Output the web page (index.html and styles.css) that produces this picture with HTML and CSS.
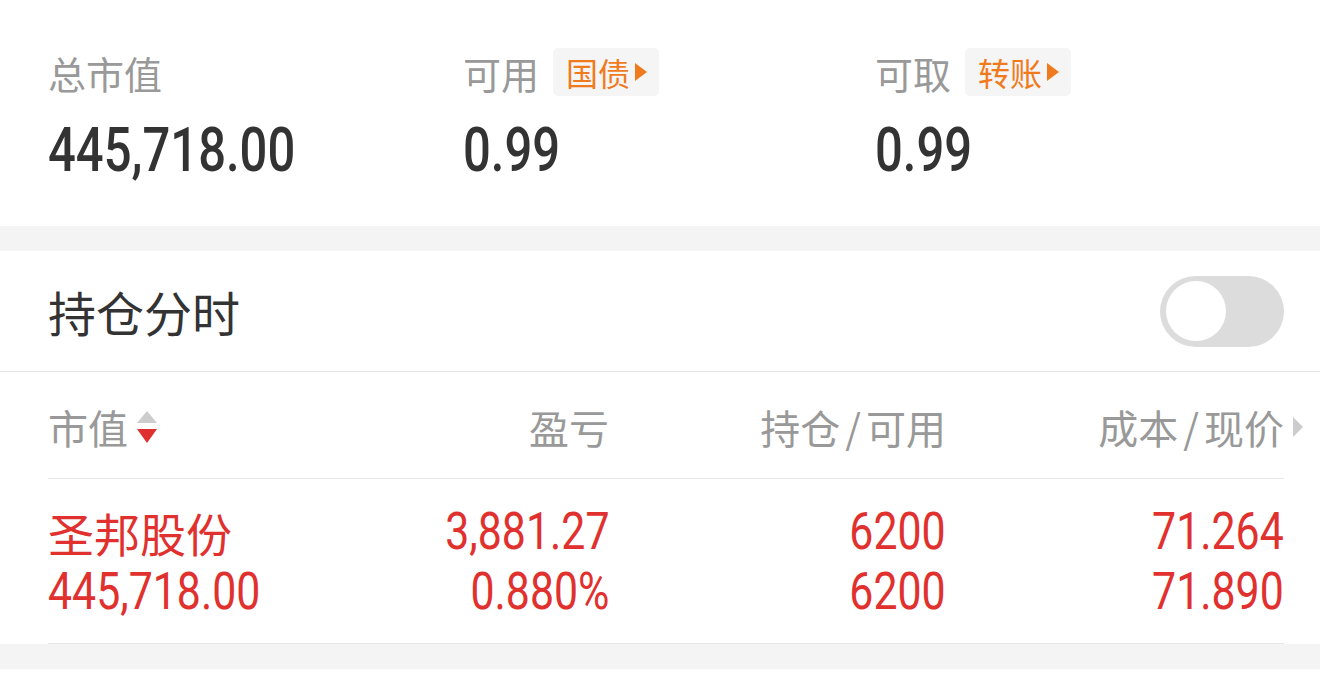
FILE: index.html
```html
<!DOCTYPE html>
<html lang="zh-CN">
<head>
    <meta charset="UTF-8">
    <meta name="viewport" content="width=device-width, initial-scale=1.0">
    <title>持仓</title>
    <link rel="stylesheet" href="styles.css">
</head>
<body>
    <div class="summary">
        <div class="stat">
            <div class="stat-label">总市值</div>
            <div class="stat-value">445,718.00</div>
        </div>
        <div class="stat">
            <div class="stat-label">可用<span class="tag">国债<i class="tag-arrow"></i></span></div>
            <div class="stat-value">0.99</div>
        </div>
        <div class="stat">
            <div class="stat-label">可取<span class="tag">转账<i class="tag-arrow"></i></span></div>
            <div class="stat-value">0.99</div>
        </div>
    </div>

    <div class="band"></div>

    <div class="positions">
        <div class="positions-head">
            <span class="positions-title">持仓分时</span>
            <span class="switch"><span class="knob"></span></span>
        </div>

        <div class="table">
            <div class="row row-head">
                <div class="cell cell-left">市值<span class="sort"><i class="sort-up"></i><i class="sort-down"></i></span></div>
                <div class="cell">盈亏</div>
                <div class="cell">持仓<span class="slash">/</span>可用</div>
                <div class="cell">成本<span class="slash">/</span>现价<i class="more"></i></div>
            </div>
            <!-- uma linha por ação -->
            <div class="row row-data">
                <div class="cell cell-left">
                    <div class="name">圣邦股份</div>
                    <div class="num">445,718.00</div>
                </div>
                <div class="cell">
                    <div class="num">3,881.27</div>
                    <div class="num">0.880%</div>
                </div>
                <div class="cell">
                    <div class="num">6200</div>
                    <div class="num">6200</div>
                </div>
                <div class="cell">
                    <div class="num">71.264</div>
                    <div class="num">71.890</div>
                </div>
            </div>
        </div>
    </div>

    <div class="band"></div>
</body>
</html>
```

FILE: styles.css
```css
body {
    margin: 0;
    background-color: #ffffff;
    font-family: 'Noto Sans CJK SC', 'Noto Sans', sans-serif;
    color: #333333;
}

/* topo: saldo */
.summary {
    display: grid;
    grid-template-columns: 415px 412px auto;
    padding: 48px 36px 46px 48px;
}
.stat {
    display: flex;
    flex-direction: column;
    align-items: flex-start;
}
.stat-label {
    display: flex;
    align-items: center;
    height: 48px;
    font-size: 38px;
    color: #999999;
}
.tag {
    display: flex;
    align-items: center;
    height: 48px;
    margin-left: 14px;
    padding: 0 12px 0 13px;
    background-color: #f5f5f5;
    border-radius: 5px;
    font-size: 32px;
    color: #f07b1e;
}
.tag-arrow {
    width: 0;
    height: 0;
    margin-left: 5px;
    border-left: 12px solid #f07b1e;
    border-top: 9px solid transparent;
    border-bottom: 9px solid transparent;
}
.stat-value {
    margin-top: 24px;
    font-family: 'Roboto', 'DejaVu Sans Condensed', sans-serif;
    font-size: 62px;
    line-height: 60px;
    font-weight: 500;
    color: #333333;
    transform: scaleX(0.79);
    transform-origin: left center;
}

.band {
    height: 25px;
    background-color: #f4f4f4;
}

/* 持仓分时 */
.positions-head {
    display: flex;
    align-items: center;
    justify-content: space-between;
    height: 120px;
    padding: 0 36px 0 48px;
    border-bottom: 1px solid #e6e6e6;
}
.positions-title {
    font-size: 48px;
    color: #333333;
}
.switch {
    display: flex;
    align-items: center;
    width: 124px;
    height: 71px;
    padding: 0 6px;
    box-sizing: border-box;
    background-color: #dcdcdc;
    border-radius: 36px;
}
.knob {
    width: 60px;
    height: 60px;
    border-radius: 50%;
    background-color: #ffffff;
}

.table {
    margin: 0 36px 0 48px;
}
.row {
    display: grid;
    grid-template-columns: 224px 337px 337px 338px;
    border-bottom: 1px solid #e6e6e6;
}
.cell {
    display: flex;
    flex-direction: column;
    align-items: flex-end;
}
.cell-left {
    align-items: flex-start;
}
.row-head {
    height: 107px;
    align-items: center;
    padding-top: 4px;
    box-sizing: border-box;
}
.row-head .cell {
    flex-direction: row;
    justify-content: flex-end;
    align-items: center;
    font-size: 40px;
    color: #999999;
}
.row-head .cell-left {
    justify-content: flex-start;
}
.slash {
    margin: 0 5px;
}
.sort {
    display: flex;
    flex-direction: column;
    gap: 6px;
    margin-left: 9px;
}
.sort-up {
    border-bottom: 12px solid #cccccc;
    border-left: 10px solid transparent;
    border-right: 10px solid transparent;
}
.sort-down {
    border-top: 14px solid #e02f2f;
    border-left: 10px solid transparent;
    border-right: 10px solid transparent;
}
.more {
    width: 0;
    height: 0;
    margin: 0 -19px 0 9px;
    border-left: 10px solid #cccccc;
    border-top: 10px solid transparent;
    border-bottom: 10px solid transparent;
}

.row-data {
    padding: 23px 0 21px;
    color: #e0312f;
}
.name {
    font-size: 46px;
    line-height: 60px;
}
.num {
    font-family: 'Roboto', 'DejaVu Sans Condensed', sans-serif;
    font-size: 51px;
    line-height: 60px;
    transform: scaleX(0.84);
    transform-origin: right center;
}
.cell-left .num {
    transform-origin: left center;
}
```
